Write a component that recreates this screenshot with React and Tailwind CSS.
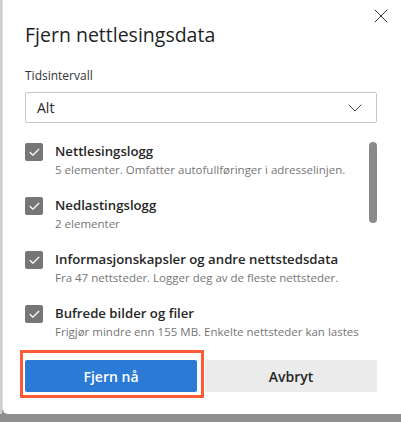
import React from 'react';
import { X, ChevronDown, Check } from 'lucide-react';

const items = [
  { title: 'Nettlesingslogg', desc: '5 elementer. Omfatter autofullføringer i adresselinjen.' },
  { title: 'Nedlastingslogg', desc: '2 elementer' },
  { title: 'Informasjonskapsler og andre nettstedsdata', desc: 'Fra 47 nettsteder. Logger deg av de fleste nettsteder.' },
  { title: 'Bufrede bilder og filer', desc: 'Frigjør mindre enn 155 MB. Enkelte nettsteder kan lastes' },
];

const App = () => {
  return (
    <div
      className="w-[401px] h-[422px] overflow-hidden bg-gradient-to-b from-[#b8b8b8] to-[#8e8e8e] flex flex-col"
      style={{ fontFamily: '"Open Sans", "Noto Sans", sans-serif' }}
    >
      <div className="flex h-[414px]">
        <div className="w-[2px] bg-[#cfcfcf]" />
        <div className="relative flex-1 bg-white rounded-bl-[6px] border-l border-[#e0e0e0] flex flex-col">
          <X size={24} strokeWidth={1} className="absolute top-[4px] right-[8px] text-[#333]" />
          <h1 className="pl-[22px] pt-[22px] text-[19.5px] leading-[26px] text-[#1f1f1f]">Fjern nettlesingsdata</h1>
          <div className="pl-[22px] mt-[20px] text-[12px] leading-[16px] text-[#333]">Tidsintervall</div>
          <div className="ml-[22px] mr-[24px] mt-[8px] h-[31px] border border-[#c6c6c6] rounded-[2px] flex items-center justify-between pl-[11px] pr-[9px]">
            <span className="text-[14px] text-[#262626]">Alt</span>
            <ChevronDown size={24} strokeWidth={1} className="text-[#444]" />
          </div>
          <div className="relative mt-[19px] h-[198px] overflow-hidden">
            <div className="flex flex-col gap-[17px] pl-[22px]">
              {items.map((it) => (
                <div key={it.title} className="flex gap-[12px]">
                  <div className="w-[18px] h-[18px] shrink-0 rounded-[2px] bg-[#767676] flex items-center justify-center mt-[1px]">
                    <Check size={13} strokeWidth={2.2} className="text-white" />
                  </div>
                  <div className="flex flex-col">
                    <span className="text-[13.2px] leading-[19px] font-semibold text-[#262626]">{it.title}</span>
                    <span className="text-[11.5px] leading-[18px] text-[#767676] whitespace-nowrap">{it.desc}</span>
                  </div>
                </div>
              ))}
            </div>
            <div className="absolute right-[24px] top-[0px] w-[8px] h-[81px] rounded-full bg-[#8a8a8a]" />
          </div>
          <div className="flex gap-[8px] pl-[22px] pr-[24px] mt-[20px]">
            <div className="relative flex-1">
              <button className="w-full h-[32px] rounded-[2px] bg-[#2a7ad6] text-white text-[14px] font-semibold">Fjern nå</button>
              <div className="absolute -left-[5px] -right-[7px] -top-[10px] -bottom-[6px] border-[3px] border-[#ff5a36]" />
            </div>
            <button className="flex-1 h-[32px] rounded-[2px] bg-[#ebebeb] text-[#262626] text-[14px] font-semibold">Avbryt</button>
          </div>
        </div>
      </div>
    </div>
  );
};

export default App;
